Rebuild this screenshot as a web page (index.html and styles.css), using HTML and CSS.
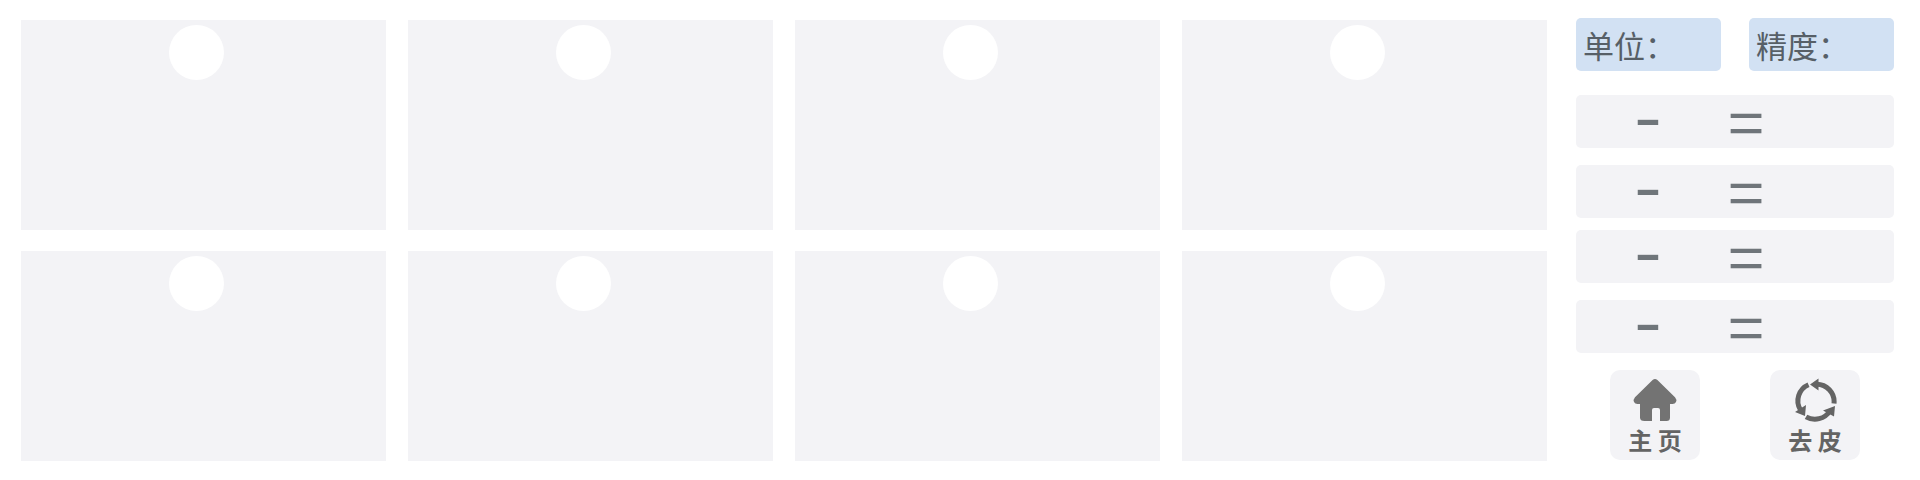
FILE: index.html
```html
<!DOCTYPE html>
<html lang="zh-CN">
<head>
<meta charset="utf-8">
<meta name="viewport" content="width=device-width, initial-scale=1">
<title>主页</title>
<link rel="stylesheet" href="styles.css">
</head>
<body>
<main class="page">
  <section class="cards">
    <article class="card"><span class="dot"></span></article>
    <article class="card"><span class="dot"></span></article>
    <article class="card"><span class="dot"></span></article>
    <article class="card"><span class="dot"></span></article>
    <article class="card"><span class="dot"></span></article>
    <article class="card"><span class="dot"></span></article>
    <article class="card"><span class="dot"></span></article>
    <article class="card"><span class="dot"></span></article>
  </section>
  <aside class="panel">
    <div class="settings">
      <div class="setting">单位：</div>
      <div class="setting">精度：</div>
    </div>
    <div class="formulas">
      <div class="pair">
        <div class="formula"><span class="minus">-</span><span class="equals">=</span></div>
        <div class="formula"><span class="minus">-</span><span class="equals">=</span></div>
      </div>
      <div class="pair">
        <div class="formula"><span class="minus">-</span><span class="equals">=</span></div>
        <div class="formula"><span class="minus">-</span><span class="equals">=</span></div>
      </div>
    </div>
    <div class="actions">
      <button class="action" type="button">
        <svg class="icon home" viewBox="0 0 44 44" aria-hidden="true">
          <path d="M19.6 2q2.4-2 4.800 0L42 19.300q2 2.200 1 4.700-1 2-3.500 2h-2.500v13.500q0 3.500-3.500 3.500H27V32q0-2-2-2h-4q-2 0-2 2v11h-7.500Q7 43 7 39.500V26H4.500Q2 26 1 24q-1-2.500 1-4.700z"/>
        </svg>
        <span>主 页</span>
      </button>
      <button class="action" type="button">
        <svg class="icon tare" viewBox="0 0 44 44" aria-hidden="true">
          <path class="arc" d="M23 6.200A17.500 17.500 0 0 1 41 25.500"/>
          <path class="arc" d="M15.500 6.700A17.500 17.500 0 0 0 7.500 32"/>
          <path class="arc" d="M13 38.800A18 18 0 0 0 37 33"/>
          <path d="M17 6.500 25.500 0.500v12zM2 34l10 4L13 27zM42 28l-12 4.500 11 6z"/>
        </svg>
        <span>去 皮</span>
      </button>
    </div>
  </aside>
</main>
</body>
</html>
```
FILE: styles.css
```css
* {
  box-sizing: border-box;
}

body {
  margin: 0;
  background: #fff;
  font-family: "Noto Sans CJK SC", sans-serif;
}

.page {
  display: grid;
  grid-template-columns: minmax(0, 1fr) 318px;
  gap: 29px;
  min-height: 100vh;
  padding: 18px 26px 19px 21px;
}

.cards {
  display: grid;
  grid-template-columns: repeat(4, minmax(0, 1fr));
  grid-template-rows: repeat(2, minmax(210px, 1fr));
  gap: 21px 22px;
  padding-top: 2px;
}

.card {
  display: flex;
  justify-content: center;
  align-items: flex-start;
  padding: 5px 14px 0 0;
  background: #f3f3f6;
}

.dot {
  width: 55px;
  height: 55px;
  border-radius: 50%;
  background: #fff;
}

.panel {
  display: flex;
  flex-direction: column;
}

.settings {
  display: grid;
  grid-template-columns: 1fr 1fr;
  gap: 28px;
  margin-bottom: 24px;
}

.setting {
  padding: 0 7px;
  border-radius: 5px;
  background: #d2e1f3;
  color: #575f67;
  font-size: 31px;
  line-height: 53px;
  white-space: nowrap;
}

.formulas {
  display: grid;
  gap: 12px;
  margin-bottom: 17px;
}

.pair {
  display: grid;
  gap: 17px;
}

.formula {
  display: grid;
  grid-template-columns: 144px 52px 1fr;
  height: 53px;
  border-radius: 5px;
  background: #f3f3f6;
  color: #6f757a;
  font-size: 64px;
  line-height: 48px;
  text-align: center;
}

.minus {
  font-family: Inter, sans-serif;
}

.actions {
  display: flex;
  justify-content: space-between;
  padding: 0 34px;
}

.action {
  display: flex;
  flex-direction: column;
  align-items: center;
  width: 90px;
  height: 90px;
  padding: 8px 0 0;
  border: 0;
  border-radius: 10px;
  background: #f3f3f6;
  color: #646464;
  font-family: inherit;
  font-size: 24px;
  font-weight: 700;
  line-height: 36px;
  cursor: pointer;
}

.icon {
  width: 44px;
  height: 44px;
  fill: currentColor;
}

.home {
  color: #737373;
}

.arc {
  fill: none;
  stroke: currentColor;
  stroke-width: 5;
}
```
